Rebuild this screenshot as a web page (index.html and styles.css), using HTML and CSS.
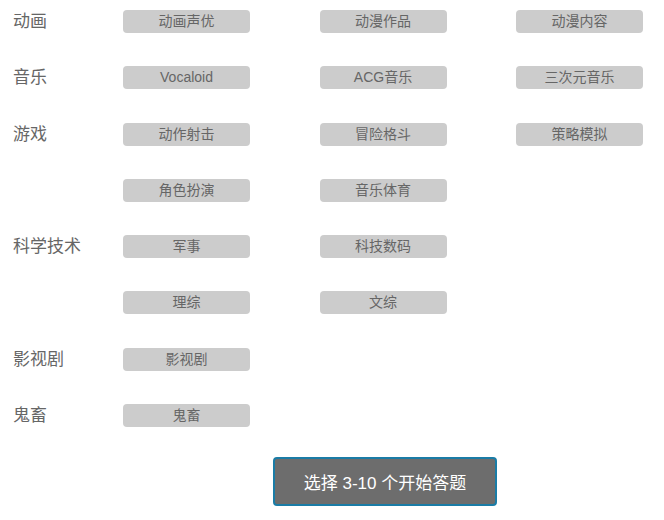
FILE: index.html
```html
<!DOCTYPE html>
<html lang="zh-CN">
<head>
<meta charset="UTF-8">
<meta name="viewport" content="width=device-width, initial-scale=1.0">
<title>选择分区</title>
<link rel="stylesheet" href="styles.css">
</head>
<body>

<div class="container">
    <div class="tag-grid">
        <div class="cat-name">动画</div>
        <div class="tag">动画声优</div>
        <div class="tag">动漫作品</div>
        <div class="tag">动漫内容</div>

        <div class="cat-name">音乐</div>
        <div class="tag">Vocaloid</div>
        <div class="tag">ACG音乐</div>
        <div class="tag">三次元音乐</div>

        <div class="cat-name">游戏</div>
        <div class="tag">动作射击</div>
        <div class="tag">冒险格斗</div>
        <div class="tag">策略模拟</div>

        <div class="cat-name"></div>
        <div class="tag">角色扮演</div>
        <div class="tag">音乐体育</div>
        <div class="empty"></div>

        <div class="cat-name">科学技术</div>
        <div class="tag">军事</div>
        <div class="tag">科技数码</div>
        <div class="empty"></div>

        <div class="cat-name"></div>
        <div class="tag">理综</div>
        <div class="tag">文综</div>
        <div class="empty"></div>

        <div class="cat-name">影视剧</div>
        <div class="tag">影视剧</div>
        <div class="empty"></div>
        <div class="empty"></div>

        <div class="cat-name">鬼畜</div>
        <div class="tag">鬼畜</div>
        <div class="empty"></div>
        <div class="empty"></div>
    </div>

    <div class="footer">
        <button type="button" class="start-btn">选择 3-10 个开始答题</button>
    </div>
</div>

</body>
</html>
```

FILE: styles.css
```css
body {
    font-family: "Liberation Sans", Arial, "Noto Sans CJK SC", sans-serif;
    background-color: #fff;
    margin: 0;
    padding: 0;
}
.container {
    padding: 10px 13px 0 13px;
}
.tag-grid {
    display: grid;
    grid-template-columns: 110px 196.5px 196.5px 127px;
    grid-auto-rows: 23px;
    row-gap: 33.3px;
    align-items: center;
}
.cat-name {
    font-size: 17px;
    color: #666;
    line-height: 23px;
    white-space: nowrap;
}
.tag {
    width: 127px;
    height: 23px;
    line-height: 23px;
    background-color: #cccccc;
    border-radius: 4px;
    color: #666;
    font-size: 14px;
    text-align: center;
}
.footer {
    padding-left: 112px;
    width: 520px;
    display: flex;
    justify-content: center;
    margin-top: 30px;
}
.start-btn {
    width: 224px;
    height: 49px;
    padding: 0;
    border: 2px solid #1a7ca6;
    border-radius: 4px;
    background-color: #6d6d6d;
    color: #fff;
    font-family: "Liberation Sans", Arial, "Noto Sans CJK SC", sans-serif;
    font-size: 17px;
    cursor: pointer;
}
```
